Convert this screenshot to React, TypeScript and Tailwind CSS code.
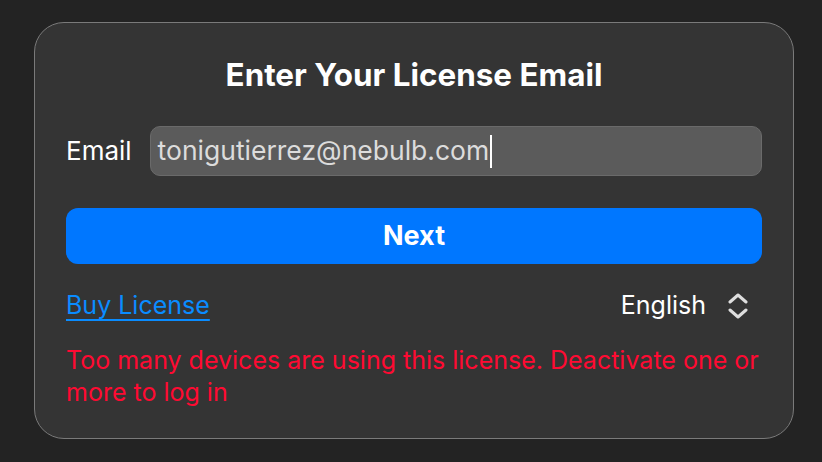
export default function App() {
  return (
    <div
      className="h-[462px] w-[822px] bg-[#232323] pt-[22px] pl-[34px]"
      style={{ fontFamily: "Inter, 'Noto Sans', sans-serif" }}
    >
      <div className="flex h-[417px] w-[760px] flex-col rounded-[30px] border-[1.5px] border-[#7a7a7a] bg-[#343434] px-[31px] pt-[33px]">
        <h1 className="text-center text-[31.4px] font-bold leading-[38px] text-white">
          Enter Your License Email
        </h1>

        <div className="mt-[32px] flex items-center gap-[18px]">
          <label className="text-[26px] leading-[32px] text-white">Email</label>
          <div className="flex h-[50px] flex-1 items-center rounded-[10px] border border-[#6a6a6a] bg-[#5b5b5b] pl-[7px]">
            <span className="text-[26.5px] text-[#dcdcdc]">tonigutierrez@nebulb.com</span>
            <span className="ml-[1px] h-[33px] w-[2px] bg-white" />
          </div>
        </div>

        <button className="mt-[32px] h-[56px] w-full shrink-0 rounded-[12px] bg-[#0077ff] text-[27px] font-bold text-white">
          Next
        </button>

        <div className="mt-[27px] flex h-[30px] items-center justify-between">
          <a href="#" className="text-[25px] text-[#0a8cff] underline decoration-[1.5px] underline-offset-[5px]">
            Buy License
          </a>
          <div className="flex items-center gap-[22px] pr-[14px]">
            <span className="text-[25px] text-white">English</span>
            <svg width="20" height="26" viewBox="0 0 20 26" fill="none" stroke="#dedede" strokeWidth="3" strokeLinecap="round" strokeLinejoin="round">
              <path d="M2 9 10 2 18 9" />
              <path d="M2 17 10 24 18 17" />
            </svg>
          </div>
        </div>

        <p className="mt-[23px] text-[25px] leading-[32px] text-[#ff0a32]">
          Too many devices are using this license. Deactivate one or more to log in
        </p>
      </div>
    </div>
  );
}
